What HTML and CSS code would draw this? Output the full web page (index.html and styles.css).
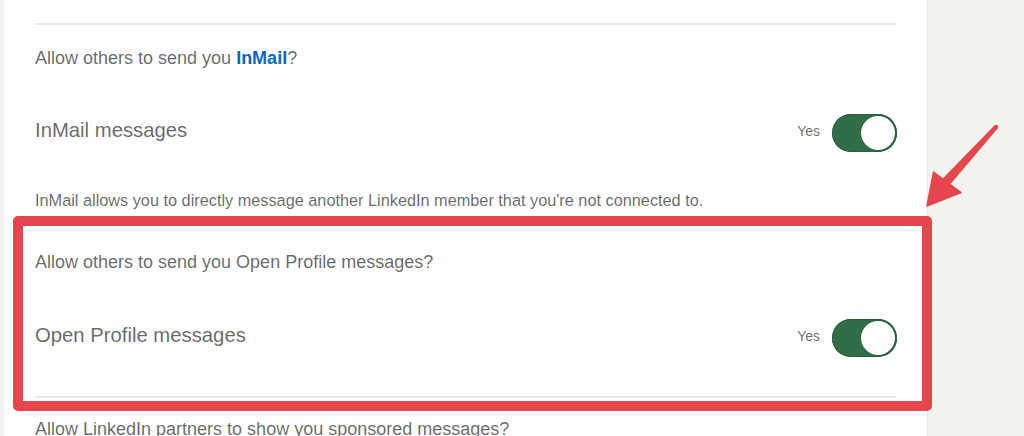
FILE: index.html
```html
<!DOCTYPE html>
<html lang="en">
<head>
<meta charset="utf-8">
<title>Messaging settings</title>
<link rel="stylesheet" href="styles.css">
</head>
<body>
<div class="page">
  <main class="card">
    <div class="divider"></div>

    <section class="setting">
      <p class="question">Allow others to send you <a class="link" href="#">InMail</a>?</p>
      <div class="row">
        <span class="title">InMail messages</span>
        <div class="control">
          <span class="state">Yes</span>
          <span class="toggle"><span class="knob"></span></span>
        </div>
      </div>
      <p class="desc">InMail allows you to directly message another LinkedIn member that you're not connected to.</p>
    </section>

    <section class="setting setting-open">
      <p class="question">Allow others to send you Open Profile messages?</p>
      <div class="row row-open">
        <span class="title">Open Profile messages</span>
        <div class="control">
          <span class="state">Yes</span>
          <span class="toggle"><span class="knob"></span></span>
        </div>
      </div>
      <div class="divider divider-bottom"></div>
    </section>

    <section class="setting setting-sponsored">
      <p class="question">Allow LinkedIn partners to show you sponsored messages?</p>
    </section>
  </main>
</div>

<div class="highlight"></div>
<svg class="arrow" viewBox="0 0 1024 436" width="1024" height="436" aria-hidden="true">
  <circle cx="996" cy="127" r="2.2" fill="#e4464c"/>
  <polygon points="994.4,125.6 997.6,128.4 949.5,185.2 942.5,178.8" fill="#e4464c"/>
  <polygon points="927,206 933.5,172 961,192.5" fill="#e4464c" stroke="#e4464c" stroke-width="1.5" stroke-linejoin="round"/>
</svg>
</body>
</html>
```

FILE: styles.css
```css
* {
  box-sizing: border-box;
}

html,
body {
  margin: 0;
  padding: 0;
}

body {
  position: relative;
  width: 1024px;
  height: 436px;
  overflow: hidden;
  background: #f3f2ef;
  font-family: "Liberation Sans", Arial, Helvetica, sans-serif;
  color: rgba(0, 0, 0, 0.6);
}

.page {
  padding-left: 4px;
}

.card {
  display: flow-root;
  width: 924px;
  height: 436px;
  background: #ffffff;
  padding: 23px 30px 0 31px;
  border-right: 1px solid #ebe9e5;
}

.divider {
  height: 2px;
  background: #e6e6e6;
  margin-right: 1px;
}

.setting {
  margin: 0;
}

.question {
  margin: 23px 0 0;
  font-size: 18px;
  line-height: 20px;
  white-space: nowrap;
}

.setting-open .question {
  margin-top: 42px;
}

.setting-sponsored .question {
  margin-top: 21px;
}

.link {
  color: #0a66c2;
  font-weight: bold;
  text-decoration: none;
}

.row {
  display: flex;
  justify-content: space-between;
  align-items: center;
  height: 38px;
  margin-top: 46px;
}

.row-open {
  margin-top: 47px;
}

.title {
  font-size: 20.3px;
  line-height: 24px;
  margin-bottom: 6px;
}

.control {
  display: flex;
  align-items: center;
  gap: 12px;
}

.state {
  font-size: 14px;
  line-height: 18px;
  margin-bottom: 4px;
}

.toggle {
  display: flex;
  justify-content: flex-end;
  align-items: center;
  width: 65px;
  height: 38px;
  padding: 2px;
  border-radius: 19px;
  background: #316e47;
  box-shadow: inset 0 0 0 1px #2a6140;
}

.knob {
  width: 34px;
  height: 34px;
  border-radius: 50%;
  background: #ffffff;
  box-shadow: 0 0 0 1px rgba(30, 80, 50, 0.35);
}

.desc {
  margin: 38px 0 0;
  font-size: 16.3px;
  line-height: 20px;
  white-space: nowrap;
}

.divider-bottom {
  margin-top: 39px;
}

.highlight {
  position: absolute;
  left: 13px;
  top: 216px;
  width: 919px;
  height: 195px;
  border: 10px solid #e4464c;
  border-radius: 5px;
  pointer-events: none;
}

.arrow {
  position: absolute;
  left: 0;
  top: 0;
  pointer-events: none;
}
```
